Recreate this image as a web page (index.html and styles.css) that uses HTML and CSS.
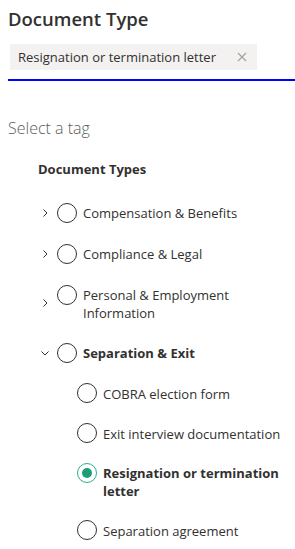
FILE: index.html
```html
<!DOCTYPE html>
<html lang="en">
<head>
<meta charset="utf-8">
<title>Document Type</title>
<link rel="stylesheet" href="styles.css">
</head>
<body>
<div class="panel">
  <h1 class="title">Document Type</h1>
  <div class="field">
    <span class="chip">
      <span class="chip-text">Resignation or termination letter</span>
      <button class="chip-close" aria-label="Remove">
        <svg width="10" height="10" viewBox="0 0 10 10"><path d="M1 1L9 9M9 1L1 9" stroke="#a19f9d" stroke-width="1.1" fill="none"/></svg>
      </button>
    </span>
  </div>

  <div class="picker">
    <div class="picker-label">Select a tag</div>
    <div class="group-label">Document Types</div>
    <ul class="tree">
      <li class="row">
        <span class="chev"><svg width="8" height="10" viewBox="0 0 8 10"><path d="M2.5 1.5L6 5L2.5 8.5" stroke="#323130" stroke-width="1" fill="none"/></svg></span>
        <span class="radio"></span>
        <span class="label">Compensation &amp; Benefits</span>
      </li>
      <li class="row">
        <span class="chev"><svg width="8" height="10" viewBox="0 0 8 10"><path d="M2.5 1.5L6 5L2.5 8.5" stroke="#323130" stroke-width="1" fill="none"/></svg></span>
        <span class="radio"></span>
        <span class="label">Compliance &amp; Legal</span>
      </li>
      <li class="row">
        <span class="chev"><svg width="8" height="10" viewBox="0 0 8 10"><path d="M2.5 1.5L6 5L2.5 8.5" stroke="#323130" stroke-width="1" fill="none"/></svg></span>
        <span class="radio"></span>
        <span class="label">Personal &amp; Employment Information</span>
      </li>
      <li class="row">
        <span class="chev"><svg width="10" height="8" viewBox="0 0 10 8"><path d="M1.5 2.5L5 6L8.5 2.5" stroke="#323130" stroke-width="1" fill="none"/></svg></span>
        <span class="radio"></span>
        <span class="label bold">Separation &amp; Exit</span>
      </li>
      <li class="row child">
        <span class="chev"></span>
        <span class="radio"></span>
        <span class="label">COBRA election form</span>
      </li>
      <li class="row child">
        <span class="chev"></span>
        <span class="radio"></span>
        <span class="label">Exit interview documentation</span>
      </li>
      <li class="row child">
        <span class="chev"></span>
        <span class="radio checked"></span>
        <span class="label bold">Resignation or termination letter</span>
      </li>
      <li class="row child">
        <span class="chev"></span>
        <span class="radio"></span>
        <span class="label">Separation agreement</span>
      </li>
    </ul>
  </div>
</div>
</body>
</html>
```

FILE: styles.css
```css
* { box-sizing: border-box; }
html, body { margin: 0; padding: 0; background: #ffffff; }
body {
  font-family: "Open Sans", "Noto Sans", "Liberation Sans", sans-serif;
  color: #323130;
}
.panel { padding: 5px 0 0 8px; }
.title {
  margin: 0;
  font-size: 18.5px;
  font-weight: 600;
  line-height: 28px;
  color: #323130;
}
.field {
  margin-top: 11px;
  padding: 0 0 9px 2px;
  border-bottom: 2px solid #0000ff;
}
.chip {
  display: inline-flex;
  align-items: center;
  height: 26px;
  width: 247px;
  background: #f3f2f1;
  padding-left: 8px;
}
.chip-text { flex: 1; font-size: 13px; color: #323130; white-space: nowrap; }
.chip-close {
  border: 0; background: transparent; padding: 0;
  width: 30px; height: 26px;
  display: flex; align-items: center; justify-content: center;
}
.picker { padding-right: 8px; }
.picker-label {
  margin-top: 36px;
  font-size: 16px;
  font-weight: 300;
  line-height: 22px;
  color: #605e5c;
}
.group-label {
  margin: 21px 0 0 30px;
  font-size: 13px;
  font-weight: 700;
  line-height: 18px;
  color: #323130;
}
.tree { list-style: none; margin: 14px 0 0; padding: 0 0 0 30px; }
.row {
  display: flex;
  align-items: center;
  padding: 10.5px 0;
}
.row.child { padding: 10px 0 10px 20px; }
.chev {
  flex: 0 0 14px;
  width: 14px;
  height: 14px;
  margin-right: 5px;
  display: flex;
  align-items: center;
  justify-content: center;
}
.radio {
  flex: 0 0 20px;
  width: 20px;
  height: 20px;
  border: 1px solid #323130;
  border-radius: 50%;
  margin-right: 6px;
  align-self: flex-start;
  position: relative;
}
.radio.checked { border-color: #2bb08a; }
.radio.checked::after {
  content: "";
  position: absolute;
  left: 4px; top: 4px;
  width: 10px; height: 10px;
  border-radius: 50%;
  background: #1e9e78;
}
.label {
  font-size: 13px;
  line-height: 18px;
  padding-top: 1px;
  color: #323130;
}
.label.bold { font-weight: 700; }
```
